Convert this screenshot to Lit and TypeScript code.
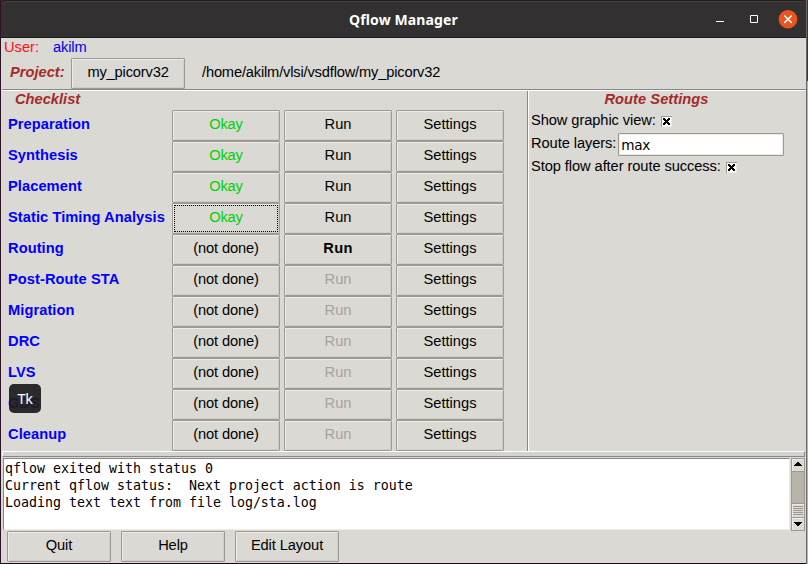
import { LitElement, html, css, svg } from "lit";
import { customElement, property } from "lit/decorators.js";
import { classMap } from "lit/directives/class-map.js";

interface Step {
  name: string;
  status: "Okay" | "(not done)";
  run: "normal" | "next" | "disabled";
  focus?: boolean;
}

const STEPS: Step[] = [
  { name: "Preparation", status: "Okay", run: "normal" },
  { name: "Synthesis", status: "Okay", run: "normal" },
  { name: "Placement", status: "Okay", run: "normal" },
  { name: "Static Timing Analysis", status: "Okay", run: "normal", focus: true },
  { name: "Routing", status: "(not done)", run: "next" },
  { name: "Post-Route STA", status: "(not done)", run: "disabled" },
  { name: "Migration", status: "(not done)", run: "disabled" },
  { name: "DRC", status: "(not done)", run: "disabled" },
  { name: "LVS", status: "(not done)", run: "disabled" },
  { name: "GDS", status: "(not done)", run: "disabled" },
  { name: "Cleanup", status: "(not done)", run: "disabled" },
];

@customElement("tk-button")
class TkButton extends LitElement {
  @property() tone = "normal";
  @property({ type: Boolean }) focused = false;

  static styles = css`
    :host { display: block; }
    .btn {
      position: relative;
      box-sizing: border-box;
      width: 100%;
      height: 100%;
      display: flex;
      align-items: center;
      justify-content: center;
      border: 1px solid #9e9a91;
      border-radius: 1px;
      box-shadow: inset 1px 1px 0 #eeebe7, inset -1px -1px 0 #cfcdc8;
      white-space: nowrap;
      padding-bottom: 2px;
    }
    .ok { color: #00d100; }
    .next { font-weight: bold; color: #000; letter-spacing: 0.3px; }
    .disabled { color: #a3a3a3; }
    .ring {
      position: absolute;
      inset: 1px;
      border: 1px dotted #000;
    }
  `;

  render() {
    return html`<div class=${classMap({ btn: true, [this.tone]: true })}>
      <slot></slot>${this.focused ? html`<span class="ring"></span>` : null}
    </div>`;
  }
}

@customElement("tk-check")
class TkCheck extends LitElement {
  static styles = css`
    :host { display: block; width: 11px; height: 11px; }
    svg { display: block; }
  `;
  render() {
    return html`<svg width="11" height="11" shape-rendering="crispEdges">
      <path d="M0 0h11v11h-11z" fill="#fff" />
      <path d="M0 0h11v1h-10v10h-1z" fill="#9e9a91" />
      <path d="M10 1h1v10h-10v-1h9z" fill="#eeebe7" />
      ${[
        [2, 2, 2], [7, 2, 2], [2, 3, 3], [6, 3, 3], [3, 4, 5], [4, 5, 3],
        [3, 6, 5], [2, 7, 3], [6, 7, 3], [2, 8, 2], [7, 8, 2],
      ].map(([x, y, w]) => svg`<rect x=${x} y=${y} width=${w} height="1" />`)}
    </svg>`;
  }
}

@customElement("app-root")
class AppRoot extends LitElement {
  static styles = css`
    :host {
      display: block;
      width: 808px;
      height: 564px;
      overflow: hidden;
      background: #75736f;
      font: 14.67px/17px "Liberation Sans", Arial, sans-serif;
      color: #000;
    }
    .frame {
      box-sizing: border-box;
      width: 806px;
      height: 564px;
      display: flex;
      flex-direction: column;
      background: #dad9d4;
      border-left: 1px solid #2c1127;
      border-bottom: 1px solid #160b15;
    }
    .edge {
      display: grid;
      grid-template-columns: 806px 2px;
    }
    .side {
      background: linear-gradient(to right, #6c6b69 50%, transparent 50%),
        linear-gradient(#373536 0 81px, #b6b5b2 81px);
    }
    .title {
      box-sizing: border-box;
      height: 38px;
      flex: none;
      display: grid;
      grid-template-columns: 1fr auto 1fr;
      align-items: center;
      background: #323031;
      border-top: 1px solid #1d1b1c;
      border-bottom: 1px solid #1c1a1b;
      box-shadow: inset 0 1px 0 #444243;
      border-radius: 5px 5px 0 0;
      color: #fff;
    }
    .title-wrap { background: #6d1518; flex: none; }
    .caption {
      grid-column: 2;
      font: bold 14px/18px "Noto Sans", sans-serif;
      letter-spacing: 0.12px;
      padding-top: 2px;
    }
    .controls { justify-self: end; display: block; margin-right: 1px; }
    .user {
      height: 19px;
      flex: none;
      display: flex;
      gap: 14px;
      padding-left: 3px;
    }
    .user span { padding-top: 1px; }
    .red { color: #f11; }
    .blue { color: #0000fe; }
    .user .blue { letter-spacing: -0.15px; }
    .project {
      height: 32px;
      flex: none;
      display: flex;
      padding-left: 9px;
    }
    .head { color: #a52a2a; font-weight: bold; font-style: italic; }
    .project .head { width: 61px; padding-top: 7px; }
    .project tk-button { width: 114px; height: 31px; margin-top: 1px; letter-spacing: -0.17px; }
    .path { padding: 7px 0 0 17px; letter-spacing: -0.17px; }
    .rule {
      flex: none;
      height: 1px;
      margin: 0 0 0 1px;
      background: #8a8788;
      border-bottom: 1px solid #fff;
    }
    .panes { display: flex; height: 360px; flex: none; }
    .left {
      box-sizing: border-box;
      width: 527px;
      border-right: 1px solid #8a8788;
    }
    .left .head { height: 19px; padding-left: 14px; }
    .step {
      display: grid;
      grid-template-columns: 160px 108px 108px 108px;
      column-gap: 4px;
      height: 31px;
      padding-left: 7px;
    }
    .name {
      color: #0000fe;
      font-weight: bold;
      padding-top: 6px;
      white-space: nowrap;
      position: relative;
      letter-spacing: 0.06px;
    }
    .status { letter-spacing: -0.15px; }
    .tip {
      position: absolute;
      left: 1px;
      top: -5px;
      width: 32px;
      height: 29px;
      border-radius: 5px;
      background: rgba(29, 28, 29, 0.93);
      color: #fff;
      font: 14.5px/29px "Noto Sans", sans-serif;
      letter-spacing: -0.3px;
      text-align: center;
    }
    .right { flex: 1; border-left: 1px solid #fff; padding-left: 2px; }
    .right .head { text-align: center; height: 21px; margin-right: 24px; letter-spacing: 0.05px; }
    .option { display: flex; height: 23px; align-items: flex-start; letter-spacing: -0.08px; }
    .option tk-check { margin: 4px 0 0 5px; }
    .field {
      box-sizing: border-box;
      width: 166px;
      height: 23px;
      margin: -2px 0 0 2px;
      border: 1px solid #9e9a91;
      border-radius: 1px;
      background: #fff;
      box-shadow: inset 0 0 0 1px #eeebe7;
      padding-left: 2px;
      font: 13.6px/22px "DejaVu Sans", sans-serif;
      letter-spacing: -0.3px;
    }
    .sash {
      flex: none;
      box-sizing: border-box;
      height: 6px;
      margin: 0 1px 0 1px;
      background: #d3d2cf;
      border-top: 1px solid #fff;
      border-left: 1px solid #fff;
      border-right: 1px solid #8a8788;
      border-bottom: 1px solid #8a8788;
    }
    .log-row { display: flex; flex: none; height: 73px; margin: 0 1px 0 2px; padding-top: 1px; }
    .log {
      flex: 1;
      box-sizing: border-box;
      height: 72px;
      background: #fff;
      border: 1px solid #8a8788;
      border-right-color: #eeebe7;
      border-bottom-color: #eeebe7;
      margin: 0;
      padding: 1px 0 0 1px;
      font: 13.29px/17px "DejaVu Sans Mono", monospace;
    }
    .bar { display: block; margin-left: 1px; }
    .footer { display: flex; flex: 1; gap: 10px; padding-left: 6px; }
    .footer tk-button { width: 104px; height: 31px; letter-spacing: -0.1px; }
  `;

  render() {
    return html`<div class="edge">
      <div class="frame">
        <div class="title-wrap">
          <div class="title">
            <span class="caption">Qflow Manager</span>
            <svg class="controls" width="96" height="34" fill="none">
              <path d="M7 19.5h8" stroke="#fff" />
              <path d="M41.5 13.5h7v7h-7z" stroke="#fff" />
              <circle cx="79" cy="17.2" r="9.3" fill="#e95420" />
              <path d="M75.3 13.5l7.4 7.4M82.7 13.5l-7.4 7.4" stroke="#fff" stroke-width="1.5" />
            </svg>
          </div>
        </div>
        <div class="user"><span class="red">User:</span><span class="blue">akilm</span></div>
        <div class="project">
          <span class="head">Project:</span>
          <tk-button>my_picorv32</tk-button>
          <span class="path">/home/akilm/vlsi/vsdflow/my_picorv32</span>
        </div>
        <div class="rule"></div>
        <div class="panes">
          <div class="left">
            <div class="head">Checklist</div>
            ${STEPS.map(
              (s) => html`<div class="step">
                <div class="name">${s.name}${s.name === "GDS" ? html`<span class="tip">Tk</span>` : null}</div>
                <tk-button class="status" tone=${s.status === "Okay" ? "ok" : "normal"} ?focused=${s.focus}>${s.status}</tk-button>
                <tk-button tone=${s.run}>Run</tk-button>
                <tk-button>Settings</tk-button>
              </div>`
            )}
          </div>
          <div class="right">
            <div class="head">Route Settings</div>
            <div class="option">Show graphic view:<tk-check></tk-check></div>
            <div class="option">Route layers:<div class="field">max</div></div>
            <div class="option">Stop flow after route success:<tk-check></tk-check></div>
          </div>
        </div>
        <div class="sash"></div>
        <div class="log-row">
          <pre class="log">qflow exited with status 0
Current qflow status:  Next project action is route
Loading text text from file log/sta.log</pre>
          <svg class="bar" width="14" height="73" shape-rendering="crispEdges">
            <path d="M0 0h14v73h-14z" fill="#9e9a91" />
            <path d="M1 14h12v31h-12z" fill="#b8b4aa" />
            <path d="M1 1h12v12h-12zM1 46h12v13h-12zM1 60h12v12h-12z" fill="#dcdad5" />
            <path d="M1.5 13v-11.5h11.5M1.5 59v-12.5h11.5M1.5 72v-11.5h11.5" fill="none" stroke="#eeebe7" />
            <path d="M6 4h2v1h1v1h1v1h1v1h-8v-1h1v-1h1v-1h1zM3 64h8v1h-1v1h-1v1h-1v1h-2v-1h-1v-1h-1v-1h-1z" />
            <path d="M2 48.5h10M2 50.5h10M2 52.5h10M2 54.5h10M2 56.5h10" stroke="#9e9a91" />
          </svg>
        </div>
        <div class="footer">
          <tk-button>Quit</tk-button><tk-button>Help</tk-button><tk-button>Edit Layout</tk-button>
        </div>
      </div>
      <div class="side"></div>
    </div>`;
  }
}
